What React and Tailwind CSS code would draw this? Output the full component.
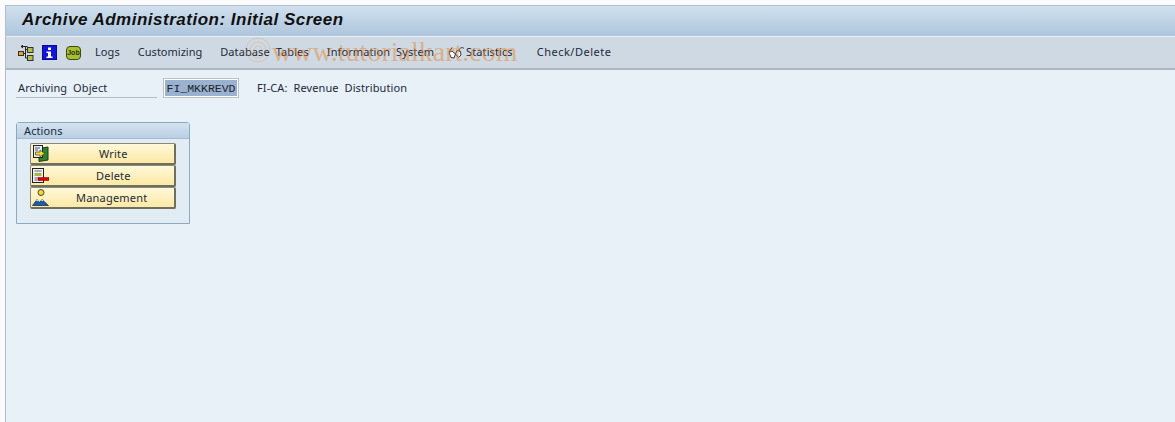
// SAP GUI style initial screen
function TreeIcon() {
  return (
    <svg width="16" height="16" viewBox="0 0 16 16" className="shrink-0">
      <path d="M9.500 1.500H3M3 1.500l2-1.500M3 1.500l2 1.500M7.500 1.500V13M7.500 4.500h2M7.500 13h2M5 8.500h2.500" fill="none" stroke="#222" strokeWidth="1" />
      <rect x="0.500" y="6.500" width="5" height="4" fill="#f0a020" stroke="#333" strokeWidth="1" />
      <rect x="9.500" y="2.500" width="5.500" height="5" fill="#b4c048" stroke="#333" strokeWidth="1" />
      <rect x="9.500" y="10.500" width="5.500" height="5" fill="#b4c048" stroke="#333" strokeWidth="1" />
    </svg>
  )
}

function InfoIcon() {
  return (
    <svg width="15" height="15" viewBox="0 0 15 15" className="shrink-0">
      <rect width="15" height="15" fill="#0a0a9a" />
      <rect x="1" y="1" width="13" height="13" fill="#1414d8" />
      <path d="M6 2.500h3v2.500H6zM4.500 6.500H9V11.500h1.500V13h-6v-1.500H6V8H4.500z" fill="#fff" />
    </svg>
  )
}

function JobIcon() {
  return (
    <div className="w-[15px] h-[14px] shrink-0 rounded-[4px] border border-[#3b4a10] bg-[#a8c030] flex items-center justify-center font-['Liberation_Sans',sans-serif] font-bold text-[7px] leading-none text-[#26300a]">
      Job
    </div>
  )
}

function GlassesIcon() {
  return (
    <svg width="17" height="14" viewBox="0 0 17 14" className="shrink-0">
      <path d="M4 1.500L1 6M11 5c0-3 3-4.500 5-2.500" fill="none" stroke="#333" strokeWidth="1" />
      <path d="M1 6.500l3-1.500 3.500 3L6 12l-3-.5z" fill="#fff" stroke="#333" strokeWidth="1" />
      <path d="M7.500 8L9 4.500l3.500 1L13 9l-2.500 2.500z" fill="#fff" stroke="#333" strokeWidth="1" />
    </svg>
  )
}

function WriteIcon() {
  return (
    <svg width="17" height="17" viewBox="0 0 17 17">
      <path d="M7 3.500l9-1.500v13l-9 1.500z" fill="#2f8030" stroke="#1c3a1c" />
      <rect x="1.500" y="0.500" width="9" height="12" fill="#e8ecf4" stroke="#222" />
      <path d="M3 3h5M3 5h3" stroke="#4a5a90" />
      <path d="M3.500 7h4.500V5l4.500 3.500L8 12v-2H3.500z" fill="#f4e020" stroke="#444" strokeWidth="0.700" />
    </svg>
  )
}

function DeleteIcon() {
  return (
    <svg width="17" height="16" viewBox="0 0 17 16">
      <rect x="0.500" y="0.500" width="11" height="14" fill="#eef0f6" stroke="#222" />
      <path d="M2.500 3h7" stroke="#667" />
      <rect x="2.500" y="5" width="7" height="3" fill="#a4b848" />
      <path d="M2.500 10h3M2.500 12h3" stroke="#667" />
      <rect x="6" y="9.500" width="11" height="3" fill="#e00000" stroke="#700" strokeWidth="0.500" />
    </svg>
  )
}

function ManagementIcon() {
  return (
    <svg width="17" height="17" viewBox="0 0 17 17">
      <circle cx="9" cy="3.500" r="3" fill="#f6d820" stroke="#444" />
      <path d="M0.500 16.500l4.500-6 2.500 3 2.500-3 6.500 6z" fill="#1c5cb0" stroke="#123" strokeWidth="0.700" />
      <path d="M4 11.800l1-1.300 1.500 1.800zM9 11.800l1-1.300 1.500 1.500z" fill="#fff" />
    </svg>
  )
}

function ToolItem({ children, className }) {
  return <span className={`whitespace-nowrap ${className || ''}`}>{children}</span>
}

function ActionButton({ icon, label, textClass }) {
  return (
    <button className="relative h-[22px] w-[146px] flex items-center rounded-[2px] border border-[#8a8a78] border-b-2 border-r-2 border-b-[#6f6f5f] border-r-[#6f6f5f] bg-gradient-to-b from-[#fff8da] to-[#fde9a4] text-[#1c2a38]">
      <span className="w-[20px] pl-[1px] flex items-center shrink-0">{icon}</span>
      <span className={`pt-[1px] tracking-[0.2px] ${textClass}`}>{label}</span>
    </button>
  )
}

export default function App() {
  return (
    <div className="relative w-[1175px] h-[422px] overflow-hidden bg-[#fbfbfd] pl-[5px] pt-[5px] font-['Noto_Sans',sans-serif] text-[11px] tracking-[0.1px] [word-spacing:3px] text-[#1c2a3a]">
      <div className="h-[417px] border-l border-t border-[#b3bcc8] bg-[#e8f0f8] flex flex-col">
        {/* title bar */}
        <div className="h-[30px] shrink-0 flex items-center pl-[16px] pb-[2px] bg-gradient-to-b from-[#d0e0ee] to-[#aec5dc]">
          <h1 className="font-['Liberation_Sans',sans-serif] italic font-bold text-[17px] text-[#101010] tracking-[0.5px] [word-spacing:0]">
            Archive Administration: Initial Screen
          </h1>
        </div>

        {/* toolbar */}
        <div className="h-[33px] shrink-0 mt-[1px] flex items-center pl-[12px] bg-[#ced9e4] border-b-2 border-[#aab5c0]">
          <TreeIcon />
          <div className="ml-[8px]"><InfoIcon /></div>
          <div className="ml-[9px]"><JobIcon /></div>
          <ToolItem className="ml-[14px]">Logs</ToolItem>
          <ToolItem className="ml-[18px] tracking-normal">Customizing</ToolItem>
          <ToolItem className="ml-[18px]">Database Tables</ToolItem>
          <ToolItem className="ml-[18px]">Information System</ToolItem>
          <div className="ml-[14px]"><GlassesIcon /></div>
          <ToolItem className="ml-[1px]">Statistics</ToolItem>
          <ToolItem className="ml-[24px] tracking-[0.5px]">Check/Delete</ToolItem>
        </div>

        {/* archiving object row */}
        <div className="mt-[8px] ml-[10px] h-[20px] flex items-center">
          <div className="w-[141px] h-[20px] flex items-center pl-[2px] pt-[1px] border-b border-[#b5bcc4]">Archiving Object</div>
          <div className="ml-[6px] w-[76px] h-[20px] border border-[#b9c1ca] bg-white p-[1px] flex">
            <span className="flex-1 bg-[#9ab2d0] font-['Liberation_Mono',monospace] text-[11.500px] tracking-normal leading-[17px] text-center text-[#20242c] whitespace-nowrap overflow-hidden">
              FI_MKKREVD
            </span>
          </div>
          <span className="ml-[18px] pt-[1px]">FI-CA: Revenue Distribution</span>
        </div>

        {/* actions group */}
        <div className="mt-[24px] ml-[10px] w-[174px] h-[102px] rounded-t-[3px] border border-[#8fa9bf] bg-[#e2ecf5]">
          <div className="h-[16px] pl-[7px] pt-[1px] flex items-center bg-gradient-to-b from-[#d4e3f0] to-[#b9cfe3] border-b border-[#a5bccf]">Actions</div>
          <div className="mt-[4px] ml-[13px] flex flex-col">
            <ActionButton icon={<WriteIcon />} label="Write" textClass="ml-[48px]" />
            <ActionButton icon={<DeleteIcon />} label="Delete" textClass="ml-[45px]" />
            <ActionButton icon={<ManagementIcon />} label="Management" textClass="ml-[25px]" />
          </div>
        </div>
      </div>

      {/* watermark */}
      <svg width="26" height="26" viewBox="0 0 26 26" className="absolute left-[245px] top-[37px] pointer-events-none">
        <circle cx="13" cy="13" r="12" fill="none" stroke="#e8862a" strokeOpacity="0.25" />
        <circle cx="13" cy="13" r="8" fill="none" stroke="#e8862a" strokeOpacity="0.25" />
        <circle cx="13" cy="13" r="4" fill="none" stroke="#e8862a" strokeOpacity="0.25" />
      </svg>
      <div className="absolute left-[272px] top-[36px] font-['Liberation_Serif',serif] text-[28px] leading-[32px] tracking-normal [word-spacing:0] text-[#e8862a]/50 whitespace-nowrap pointer-events-none">
        www.tutorialkart.com
      </div>
    </div>
  )
}
